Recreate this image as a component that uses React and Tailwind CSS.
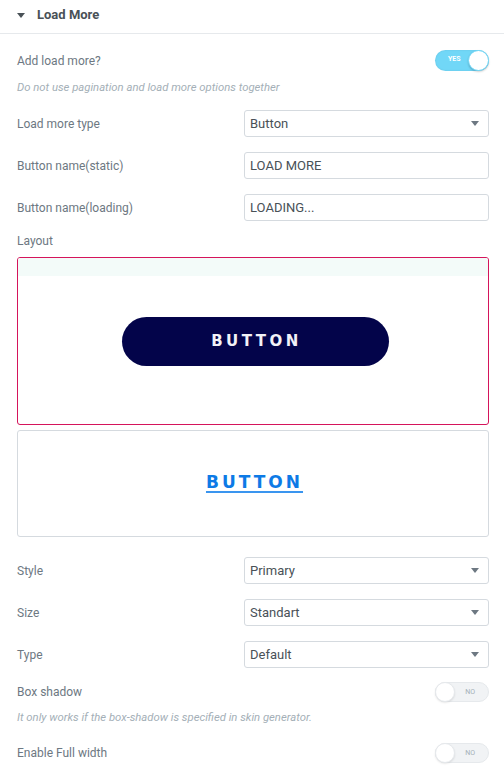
const font = { fontFamily: 'Roboto, "Liberation Sans", sans-serif' }
const wide = { fontFamily: '"DejaVu Sans", "Liberation Sans", sans-serif' }

function Caret({ className = '' }) {
  return (
    <svg width="8" height="5" viewBox="0 0 8 5" className={className}>
      <path d="M0 0 L8 0 L4 5 Z" fill="currentColor" />
    </svg>
  )
}

function Toggle({ on }) {
  if (on) {
    return (
      <div className="relative w-[54px] h-[21px] rounded-full bg-[#71d7f7] shadow-[inset_0_0_2px_rgba(0,0,0,0.1)]">
        <span className="absolute left-[13px] top-[6px] text-[7px] font-bold leading-none text-white">YES</span>
        <span className="absolute right-0 top-0 w-[21px] h-[21px] rounded-full bg-white border border-[#71d7f7] shadow-[0_1px_2px_rgba(0,0,0,0.2)]" />
      </div>
    )
  }
  return (
    <div className="relative w-[54px] h-[20px] rounded-full bg-[#f1f3f5] border border-[#e6e9ec]">
      <span className="absolute right-[13px] top-[6px] text-[7px] leading-none text-[#a4afb7]">NO</span>
      <span className="absolute -left-px -top-px w-[20px] h-[20px] rounded-full bg-white border border-[#e6e9ec] shadow-[0_1px_2px_rgba(0,0,0,0.1)]" />
    </div>
  )
}

function Select({ value }) {
  return (
    <div className="w-[245px] h-[27px] border border-[#d5dadf] rounded-[3px] flex items-center justify-between pl-[5px] pr-[9px] text-[13px] text-[#495157] bg-white">
      <span>{value}</span>
      <Caret className="text-[#6d7882]" />
    </div>
  )
}

function TextInput({ value }) {
  return (
    <div className="w-[245px] h-[27px] border border-[#d5dadf] rounded-[3px] flex items-center pl-[5px] text-[13px] text-[#495157] bg-white">
      {value}
    </div>
  )
}

function Row({ label, children, className = '' }) {
  return (
    <div className={`flex items-center justify-between ${className}`}>
      <span className="text-[12px] text-[#6d7882]">{label}</span>
      {children}
    </div>
  )
}

function Note({ children, className = '' }) {
  return <p className={`text-[11.3px] italic text-[#a4afb7] ${className}`}>{children}</p>
}

export default function App() {
  return (
    <div className="w-[504px] h-[773px] bg-white overflow-hidden" style={font}>
      <div className="flex items-center h-[34px] border-b border-[#e6e9ec] pl-[17px]">
        <Caret className="text-[#495157] mt-[-3px]" />
        <span className="ml-[12px] text-[13px] font-bold text-[#495157] mt-[-4px]">Load More</span>
      </div>

      <div className="pl-[17px] pr-[15px]">
        <Row label="Add load more?" className="h-[21px] mt-[16px]">
          <Toggle on />
        </Row>
        <Note className="mt-[10px] leading-[14px]">Do not use pagination and load more options together</Note>

        <Row label="Load more type" className="mt-[15px]">
          <Select value="Button" />
        </Row>
        <Row label="Button name(static)" className="mt-[15px]">
          <TextInput value="LOAD MORE" />
        </Row>
        <Row label="Button name(loading)" className="mt-[15px]">
          <TextInput value="LOADING..." />
        </Row>

        <div className="text-[12px] text-[#6d7882] mt-[12px] leading-[16px]">Layout</div>

        <div className="mt-[8px] h-[168px] border border-[#d5145b] rounded-[3px] overflow-hidden flex flex-col">
          <div className="h-[18px] bg-[#f3fbf9]" />
          <div className="flex-1 flex items-center justify-center pb-[10px]">
            <div className="w-[267px] h-[49px] ml-[4px] rounded-full bg-[#03044a] flex items-center justify-center mt-[-8px]">
              <span className="text-[#f2f2f7] text-[15px] font-bold tracking-[3.5px] ml-[3px]" style={wide}>BUTTON</span>
            </div>
          </div>
        </div>

        <div className="mt-[5px] h-[107px] border border-[#d5dadf] rounded-[3px] flex items-center justify-center">
          <span className="text-[#0d7ae6] text-[17px] font-bold tracking-[3px] ml-[3px] underline underline-offset-[3px] decoration-2 decoration-[#3a95ef] mt-[-2px]" style={wide}>BUTTON</span>
        </div>

        <Row label="Style" className="mt-[20px]">
          <Select value="Primary" />
        </Row>
        <Row label="Size" className="mt-[15px]">
          <Select value="Standart" />
        </Row>
        <Row label="Type" className="mt-[15px]">
          <Select value="Default" />
        </Row>

        <Row label="Box shadow" className="mt-[14px]">
          <Toggle />
        </Row>
        <Note className="mt-[9px] leading-[14px]">It only works if the box-shadow is specified in skin generator.</Note>
        <Row label="Enable Full width" className="mt-[18px]">
          <Toggle />
        </Row>
      </div>
    </div>
  )
}
